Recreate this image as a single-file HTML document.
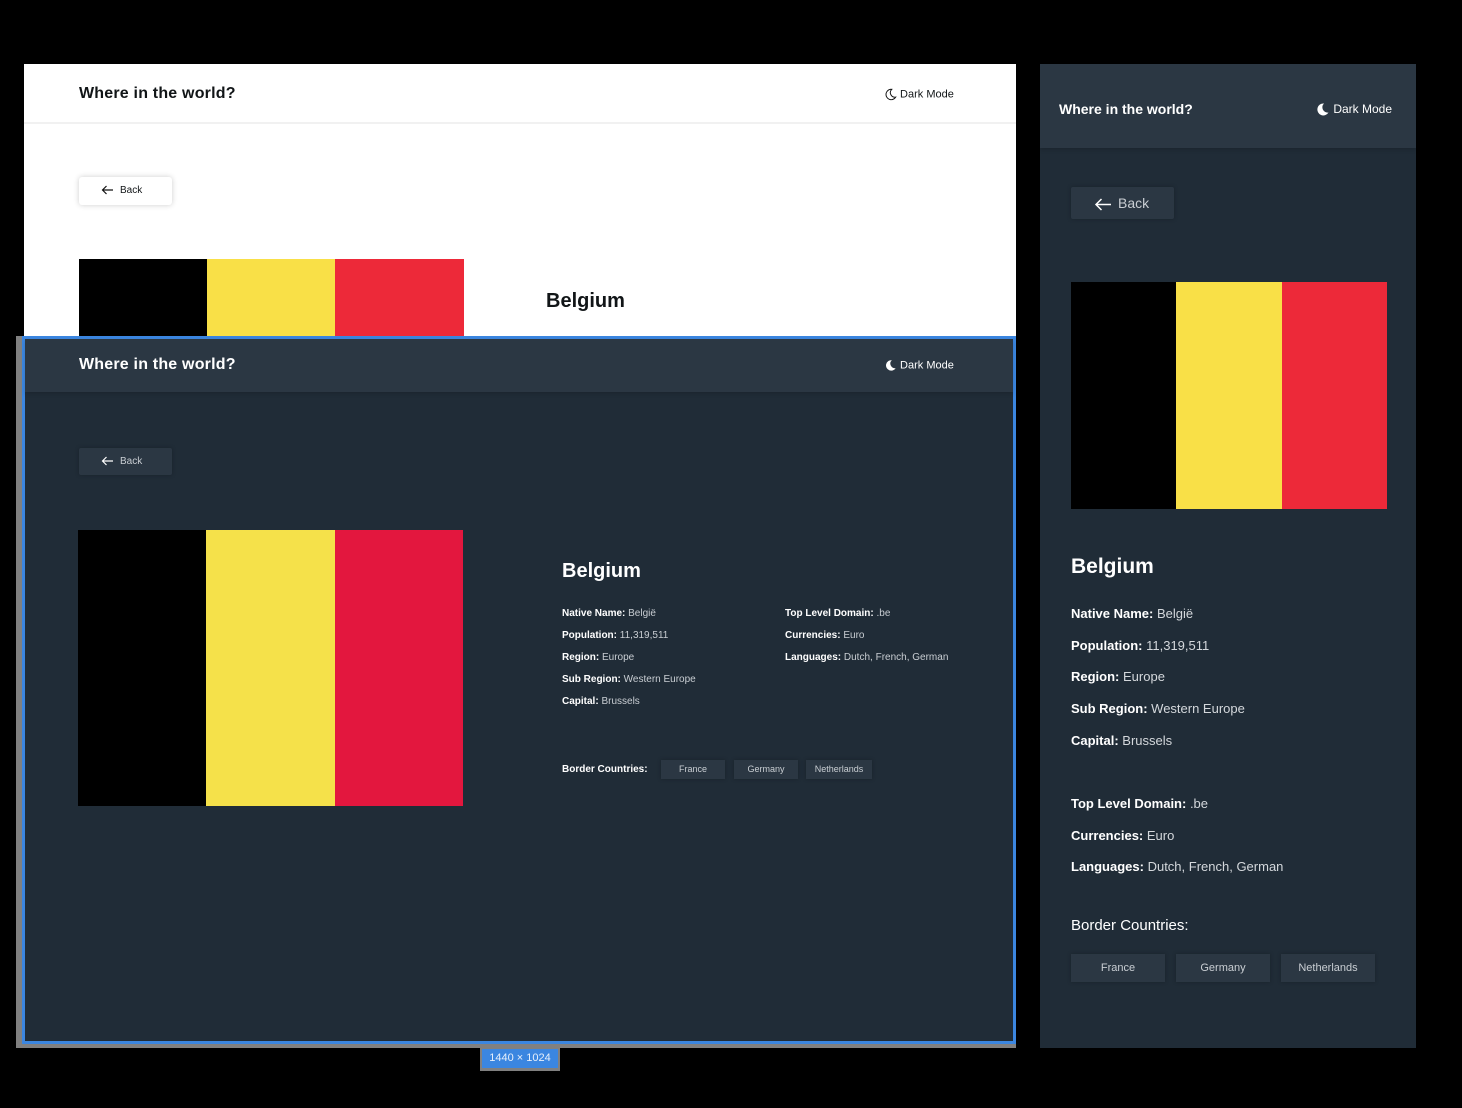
<!DOCTYPE html>
<html><head><meta charset="utf-8"><style>
*{margin:0;padding:0;box-sizing:border-box}
body{width:1462px;height:1108px;background:#000;position:relative;overflow:hidden;font-family:"Liberation Sans",sans-serif}
.a{position:absolute}
.b{font-weight:bold}
.moon{display:inline-block;vertical-align:middle}
.arr{display:inline-block;vertical-align:middle;margin-right:6px}
.info{font-size:10px;color:#c9ced3;line-height:22px}
.info b{color:#fff;font-weight:bold}
.info2{font-size:13px;color:#d4d8dc;line-height:31.7px}
.info2 b{color:#fff;font-weight:bold}
.tag{position:absolute;background:#2b3743;color:#c9ced3;text-align:center;box-shadow:0 0 4px rgba(0,0,0,.25)}
</style></head><body>

<div class="a" style="left:24px;top:64px;width:992px;height:272px;background:#fff"></div>
<div class="a" style="left:24px;top:122px;width:992px;height:2px;background:#f1f1f1"></div>
<div class="a b" style="left:79px;top:85px;font-size:16px;color:#111517;letter-spacing:.2px">Where in the world?</div>
<div class="a" style="left:884px;top:88px;font-size:11px;color:#111517">
<svg class="moon" width="13" height="13" viewBox="0 0 20 20"><path d="M12 2a8 8 0 1 0 6 12A7 7 0 0 1 12 2z" fill="none" stroke="#111" stroke-width="1.5"/></svg> Dark Mode</div>
<div class="a" style="left:79px;top:177px;width:93px;height:28px;background:#fff;box-shadow:0 0 6px rgba(0,0,0,.2);border-radius:3px;font-size:10px;color:#111517;line-height:28px;padding-left:22px"><svg class="arr" width="13" height="10" viewBox="0 0 13 10"><path d="M12 5H1.5M5.5 1L1.5 5l4 4" fill="none" stroke="#111" stroke-width="1.2"/></svg>Back</div>
<div class="a" style="left:79px;top:259px;width:128px;height:77px;background:#000"></div>
<div class="a" style="left:207px;top:259px;width:128px;height:77px;background:#f9e047"></div>
<div class="a" style="left:335px;top:259px;width:129px;height:77px;background:#ed2939"></div>
<div class="a b" style="left:546px;top:290px;font-size:20px;color:#111517">Belgium</div>

<div class="a" style="left:16px;top:336px;width:1000px;height:712px;background:#808080"></div>
<div class="a" style="left:22px;top:336px;width:994px;height:708px;background:#3b86e0"></div>
<div class="a" style="left:25px;top:339px;width:988px;height:702px;background:#202c37"></div>
<div class="a" style="left:25px;top:339px;width:988px;height:53px;background:#2b3743;box-shadow:0 2px 4px rgba(0,0,0,.15)"></div>
<div class="a b" style="left:79px;top:356px;font-size:16px;color:#fff;letter-spacing:.2px">Where in the world?</div>
<div class="a" style="left:884px;top:359px;font-size:11px;color:#fff">
<svg class="moon" width="13" height="13" viewBox="0 0 20 20"><path d="M12 2a8 8 0 1 0 6 12A7 7 0 0 1 12 2z" fill="#fff"/></svg> Dark Mode</div>
<div class="a" style="left:79px;top:448px;width:93px;height:27px;background:#2b3743;box-shadow:0 0 4px rgba(0,0,0,.25);border-radius:2px;font-size:10px;color:#c9ced3;line-height:27px;padding-left:22px"><svg class="arr" width="13" height="10" viewBox="0 0 13 10"><path d="M12 5H1.5M5.5 1L1.5 5l4 4" fill="none" stroke="#fff" stroke-width="1.2"/></svg>Back</div>
<div class="a" style="left:78px;top:530px;width:128px;height:276px;background:#000"></div>
<div class="a" style="left:206px;top:530px;width:129px;height:276px;background:#f5e14a"></div>
<div class="a" style="left:335px;top:530px;width:128px;height:276px;background:#e3173e"></div>
<div class="a b" style="left:562px;top:560px;font-size:20px;color:#fff">Belgium</div>
<div class="a info" style="left:562px;top:603px">
<div><b>Native Name:</b> België</div><div><b>Population:</b> 11,319,511</div><div><b>Region:</b> Europe</div><div><b>Sub Region:</b> Western Europe</div><div><b>Capital:</b> Brussels</div></div>
<div class="a info" style="left:785px;top:603px">
<div><b>Top Level Domain:</b> .be</div><div><b>Currencies:</b> Euro</div><div><b>Languages:</b> Dutch, French, German</div></div>
<div class="a info b" style="left:562px;top:759px;color:#fff">Border Countries:</div>
<div class="tag" style="left:661px;top:760px;width:64px;height:19px;font-size:9px;line-height:19px">France</div>
<div class="tag" style="left:734px;top:760px;width:64px;height:19px;font-size:9px;line-height:19px">Germany</div>
<div class="tag" style="left:806px;top:760px;width:66px;height:19px;font-size:9px;line-height:19px">Netherlands</div>

<div class="a" style="left:480px;top:1047px;width:80px;height:24px;background:#808080"></div>
<div class="a" style="left:482px;top:1049px;width:76px;height:19px;background:#3b86e0;color:#e8f0fb;font-size:11px;line-height:19px;text-align:center">1440 × 1024</div>

<div class="a" style="left:1040px;top:64px;width:376px;height:984px;background:#202c37"></div>
<div class="a" style="left:1040px;top:64px;width:376px;height:84px;background:#2b3743;box-shadow:0 2px 4px rgba(0,0,0,.15)"></div>
<div class="a b" style="left:1059px;top:101px;font-size:14px;color:#fff">Where in the world?</div>
<div class="a" style="left:1315px;top:102px;font-size:12px;color:#fff">
<svg class="moon" width="15" height="15" viewBox="0 0 20 20"><path d="M12 2a8 8 0 1 0 6 12A7 7 0 0 1 12 2z" fill="#fff"/></svg> Dark Mode</div>
<div class="a" style="left:1071px;top:187px;width:103px;height:32px;background:#2b3743;box-shadow:0 0 4px rgba(0,0,0,.25);border-radius:2px;font-size:14px;color:#c9ced3;line-height:32px;padding-left:23px"><svg class="arr" width="18" height="13" viewBox="0 0 18 13"><path d="M17 6.5H2M7.5 1L2 6.5 7.5 12" fill="none" stroke="#fff" stroke-width="1.5"/></svg>Back</div>
<div class="a" style="left:1071px;top:282px;width:105px;height:227px;background:#000"></div>
<div class="a" style="left:1176px;top:282px;width:106px;height:227px;background:#f9e047"></div>
<div class="a" style="left:1282px;top:282px;width:105px;height:227px;background:#ed2939"></div>
<div class="a b" style="left:1071px;top:555px;font-size:21px;color:#fff">Belgium</div>
<div class="a info2" style="left:1071px;top:598px">
<div><b>Native Name:</b> België</div><div><b>Population:</b> 11,319,511</div><div><b>Region:</b> Europe</div><div><b>Sub Region:</b> Western Europe</div><div><b>Capital:</b> Brussels</div></div>
<div class="a info2" style="left:1071px;top:788px">
<div><b>Top Level Domain:</b> .be</div><div><b>Currencies:</b> Euro</div><div><b>Languages:</b> Dutch, French, German</div></div>
<div class="a" style="left:1071px;top:917px;font-size:15px;color:#fff">Border Countries:</div>
<div class="tag" style="left:1071px;top:954px;width:94px;height:28px;font-size:11px;line-height:28px">France</div>
<div class="tag" style="left:1176px;top:954px;width:94px;height:28px;font-size:11px;line-height:28px">Germany</div>
<div class="tag" style="left:1281px;top:954px;width:94px;height:28px;font-size:11px;line-height:28px">Netherlands</div>
</body></html>
